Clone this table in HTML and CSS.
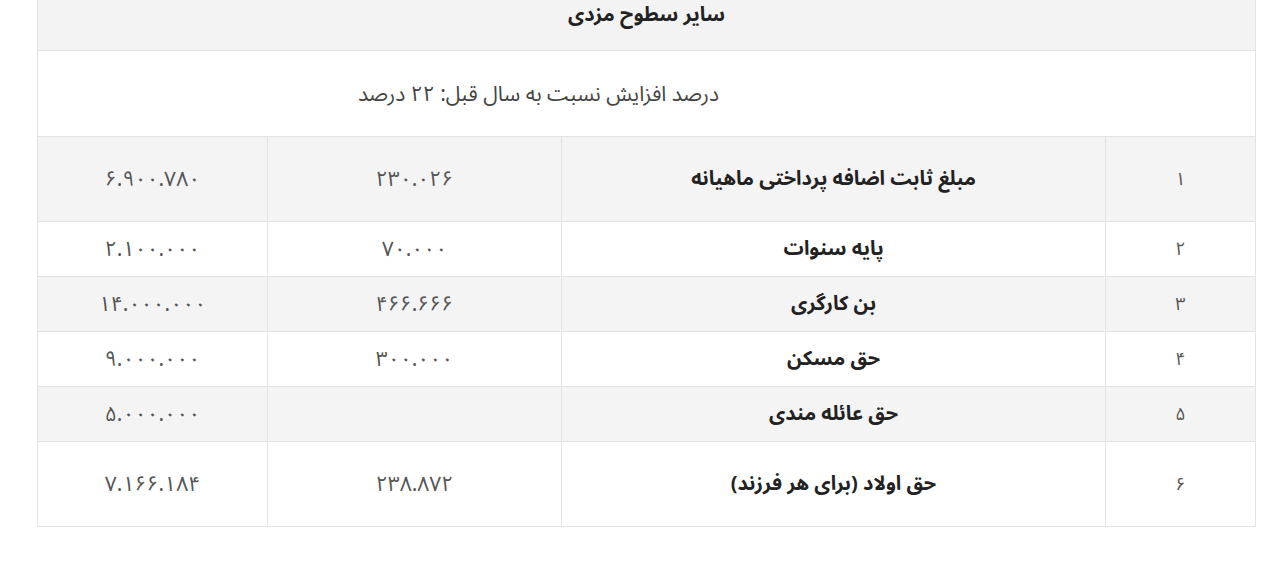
FILE: index.html
```html
<!DOCTYPE html>
<html lang="fa" dir="rtl">
<head>
<meta charset="utf-8">
<title>سایر سطوح مزدی</title>
<link rel="stylesheet" href="styles.css">
</head>
<body>
<div class="page">
<table class="wages">
  <colgroup>
    <col class="c-num">
    <col class="c-name">
    <col class="c-mid">
    <col class="c-end">
  </colgroup>
  <thead>
    <tr class="head"><th colspan="4">سایر سطوح مزدی</th></tr>
  </thead>
  <tbody>
    <tr class="note"><td colspan="4">درصد افزایش نسبت به سال قبل: ۲۲ درصد</td></tr>
    <tr class="tall shade"><td class="num">۱</td><td class="name">مبلغ ثابت اضافه پرداختی ماهیانه</td><td class="val">۲۳۰.۰۲۶</td><td class="val">۶.۹۰۰.۷۸۰</td></tr>
    <tr><td class="num">۲</td><td class="name">پایه سنوات</td><td class="val">۷۰.۰۰۰</td><td class="val">۲.۱۰۰.۰۰۰</td></tr>
    <tr class="shade"><td class="num">۳</td><td class="name">بن کارگری</td><td class="val">۴۶۶.۶۶۶</td><td class="val">۱۴.۰۰۰.۰۰۰</td></tr>
    <tr><td class="num">۴</td><td class="name">حق مسکن</td><td class="val">۳۰۰.۰۰۰</td><td class="val">۹.۰۰۰.۰۰۰</td></tr>
    <tr class="shade"><td class="num">۵</td><td class="name">حق عائله مندی</td><td class="val"></td><td class="val">۵.۰۰۰.۰۰۰</td></tr>
    <tr class="tall"><td class="num">۶</td><td class="name">حق اولاد (برای هر فرزند)</td><td class="val">۲۳۸.۸۷۲</td><td class="val">۷.۱۶۶.۱۸۴</td></tr>
  </tbody>
</table>
</div>
</body>
</html>
```
FILE: styles.css
```css
html, body {
  margin: 0;
  padding: 0;
  background: #ffffff;
}
body {
  font-family: "Noto Sans Arabic", "Vazirmatn", "DejaVu Sans", sans-serif;
  color: #333;
}
.page {
  padding: 0 24px 0 38px;
}
.wages {
  width: 1218px;
  border-collapse: collapse;
  table-layout: fixed;
}
.c-num { width: 150px; }
.c-name { width: 544px; }
.c-mid { width: 294px; }
.c-end { width: 230px; }

.wages th, .wages td {
  border: 1px solid #e3e3e3;
  text-align: center;
  padding: 0;
  vertical-align: middle;
}
.head th {
  border-top: 0;
  background: #f3f3f3;
  height: 50px;
  padding: 0 0 20px;
  line-height: 30px;
  font-size: 20px;
  font-weight: 700;
  color: #222;
  box-sizing: border-box;
}
.note td {
  height: 85px;
  text-align: right;
  padding-right: 536px;
  font-size: 21px;
  color: #444;
}
.wages tbody tr { height: 55px; }
.wages tbody tr.tall { height: 85px; }
.wages tbody tr.note { height: 85px; }
.shade td { background: #f4f4f4; }
.num {
  font-size: 18px;
  color: #555;
}
.name {
  font-size: 20px;
  font-weight: 700;
  color: #222;
}
.val {
  font-size: 21px;
  color: #555;
}
```
